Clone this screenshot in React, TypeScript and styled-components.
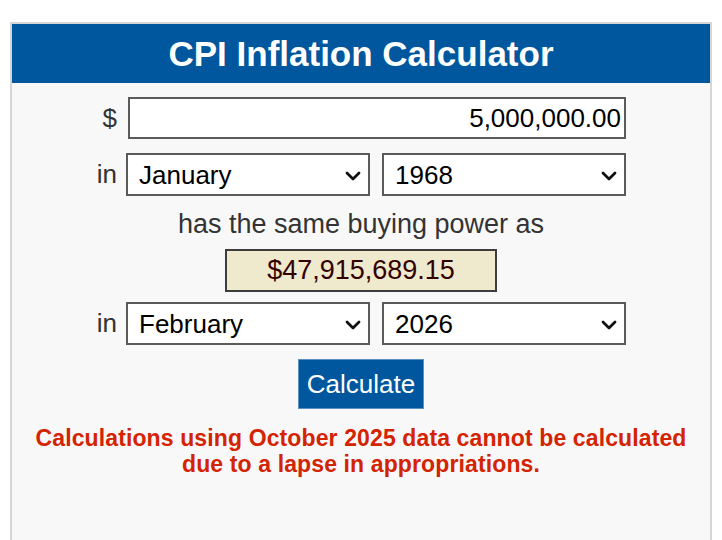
import React from "react";
import styled, { createGlobalStyle } from "styled-components";

const Global = createGlobalStyle`
  html, body { margin: 0; padding: 0; background: #ffffff; }
  body { font-family: "Liberation Sans", Arial, sans-serif; }
`;

const Page = styled.div`
  padding: 22px 10px 0 10px;
`;

const Panel = styled.div`
  width: 698px;
  height: 520px;
  border: 2px solid #d6d6d6;
  border-bottom: none;
  background: #f8f8f8;
  display: flex;
  flex-direction: column;
  align-items: center;
`;

const Header = styled.h1`
  align-self: stretch;
  margin: 0;
  height: 59px;
  background: #00579e;
  color: #ffffff;
  font-size: 35px;
  font-weight: 700;
  line-height: 59px;
  text-align: center;
`;

const Form = styled.div`
  width: 530px;
  margin-top: 14px;
  display: flex;
  flex-direction: column;
  align-items: center;
`;

const Row = styled.div<{ $mt?: number }>`
  align-self: stretch;
  display: grid;
  grid-template-columns: 30px 1fr;
  align-items: center;
  margin-top: ${(p) => p.$mt ?? 0}px;
`;

const Label = styled.label`
  text-align: right;
  padding-right: 9px;
  font-size: 26px;
  color: #333333;
`;

const Controls = styled.div`
  display: grid;
  grid-template-columns: 244px 244px;
  column-gap: 12px;
`;

const AmountInput = styled.input`
  box-sizing: border-box;
  margin-left: 2px;
  width: 498px;
  height: 42px;
  border: 2px solid #5a5a5a;
  background: #ffffff;
  padding: 0 3px;
  text-align: right;
  font-family: "Liberation Sans", Arial, sans-serif;
  font-size: 26px;
  color: #000;
  outline: none;
`;

const SelectWrap = styled.div`
  position: relative;
  width: 244px;
  height: 43px;
`;

const Select = styled.select`
  box-sizing: border-box;
  appearance: none;
  -webkit-appearance: none;
  width: 100%;
  height: 100%;
  border: 2px solid #5a5a5a;
  border-radius: 0;
  background: #ffffff;
  padding: 0 30px 0 11px;
  font-family: "Liberation Sans", Arial, sans-serif;
  font-size: 26px;
  color: #000;
  outline: none;
`;

const Chevron = styled.svg`
  position: absolute;
  right: 9px;
  top: 50%;
  width: 16px;
  height: 10px;
  margin-top: -4px;
  pointer-events: none;
`;

const Same = styled.div`
  margin-top: 13px;
  font-size: 27px;
  color: #333333;
  line-height: 30px;
`;

const Result = styled.div`
  margin-top: 10px;
  box-sizing: border-box;
  width: 272px;
  height: 43px;
  border: 2px solid #3d3d3d;
  background: #efe9ce;
  color: #330000;
  font-size: 27px;
  line-height: 39px;
  text-align: center;
`;

const Button = styled.button`
  margin-top: 14px;
  width: 126px;
  height: 50px;
  border: 1px solid #5b8fc0;
  background: #00579e;
  color: #ffffff;
  font-family: "Liberation Sans", Arial, sans-serif;
  font-size: 26px;
  padding: 0;
`;

const Notice = styled.p`
  margin: 16px 0 0;
  color: #d42300;
  font-size: 23px;
  font-weight: 700;
  letter-spacing: 0.12px;
  line-height: 26px;
  text-align: center;
`;

const months = [
  "January","February","March","April","May","June","July","August","September","October","November","December",
];

function Dropdown({ value, options }: { value: string; options: string[] }) {
  return (
    <SelectWrap>
      <Select defaultValue={value}>
        {options.map((o) => (
          <option key={o}>{o}</option>
        ))}
      </Select>
      <Chevron viewBox="0 0 16 10">
        <path d="M2 2 L8 8 L14 2" fill="none" stroke="#111" strokeWidth="2.8" strokeLinecap="round" strokeLinejoin="round" />
      </Chevron>
    </SelectWrap>
  );
}

const years = ["1968", "2026"];

export default function App() {
  return (
    <>
      <Global />
      <Page>
        <Panel>
          <Header>CPI Inflation Calculator</Header>
          <Form>
            <Row>
              <Label>$</Label>
              <AmountInput defaultValue="5,000,000.00" />
            </Row>
            <Row $mt={14}>
              <Label>in</Label>
              <Controls>
                <Dropdown value="January" options={months} />
                <Dropdown value="1968" options={years} />
              </Controls>
            </Row>
            <Same>has the same buying power as</Same>
            <Result>$47,915,689.15</Result>
            <Row $mt={10}>
              <Label>in</Label>
              <Controls>
                <Dropdown value="February" options={months} />
                <Dropdown value="2026" options={years} />
              </Controls>
            </Row>
            <Button>Calculate</Button>
          </Form>
          <Notice>
            Calculations using October 2025 data cannot be calculated
            <br />
            due to a lapse in appropriations.
          </Notice>
        </Panel>
      </Page>
    </>
  );
}
